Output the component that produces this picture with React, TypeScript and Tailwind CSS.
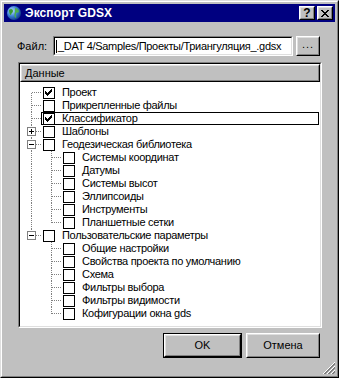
import React from 'react';

type Row = {
  level: 0 | 1;
  label: string;
  checked?: boolean;
  selected?: boolean;
  expander?: 'plus' | 'minus';
  // vertical line of the connector cell at the row's own level
  line: 'first' | 'mid' | 'last';
  // vertical line passing through the level-0 cell for children
  pass?: boolean;
};

const rows: Row[] = [
  { level: 0, label: 'Проект', checked: true, line: 'first' },
  { level: 0, label: 'Прикрепленные файлы', line: 'mid' },
  { level: 0, label: 'Классификатор', checked: true, selected: true, line: 'mid' },
  { level: 0, label: 'Шаблоны', expander: 'plus', line: 'mid' },
  { level: 0, label: 'Геодезическая библиотека', expander: 'minus', line: 'mid' },
  { level: 1, label: 'Системы координат', line: 'mid', pass: true },
  { level: 1, label: 'Датумы', line: 'mid', pass: true },
  { level: 1, label: 'Системы высот', line: 'mid', pass: true },
  { level: 1, label: 'Эллипсоиды', line: 'mid', pass: true },
  { level: 1, label: 'Инструменты', line: 'mid', pass: true },
  { level: 1, label: 'Планшетные сетки', line: 'last', pass: true },
  { level: 0, label: 'Пользовательские параметры', expander: 'minus', line: 'last' },
  { level: 1, label: 'Общие настройки', line: 'mid' },
  { level: 1, label: 'Свойства проекта по умолчанию', line: 'mid' },
  { level: 1, label: 'Схема', line: 'mid' },
  { level: 1, label: 'Фильтры выбора', line: 'mid' },
  { level: 1, label: 'Фильтры видимости', line: 'mid' },
  { level: 1, label: 'Кофигурации окна gds', line: 'last' },
];

const Dots = ({ x1, y1, x2, y2 }: { x1: number; y1: number; x2: number; y2: number }) => (
  <line
    x1={x1}
    y1={y1}
    x2={x2}
    y2={y2}
    stroke="#808080"
    strokeWidth={1}
    strokeDasharray="1 1"
    shapeRendering="crispEdges"
  />
);

// one 20x13 connector cell of the tree
const Cell = ({ kind, expander }: { kind: 'none' | 'pass' | 'first' | 'mid' | 'last'; expander?: 'plus' | 'minus' }) => (
  <svg width={20} height={13} className="shrink-0 block">
    {kind === 'pass' && <Dots x1={9.5} y1={0} x2={9.5} y2={13} />}
    {kind === 'mid' && <Dots x1={9.5} y1={0} x2={9.5} y2={13} />}
    {kind === 'first' && <Dots x1={9.5} y1={7} x2={9.5} y2={13} />}
    {kind === 'last' && <Dots x1={9.5} y1={0} x2={9.5} y2={7} />}
    {kind !== 'none' && kind !== 'pass' && <Dots x1={10} y1={6.5} x2={20} y2={6.5} />}
    {expander && (
      <g shapeRendering="crispEdges">
        <rect x={5.5} y={2.5} width={8} height={8} fill="#fff" stroke="#808080" />
        <line x1={7} y1={6.5} x2={12} y2={6.5} stroke="#000" />
        {expander === 'plus' && <line x1={9.5} y1={4} x2={9.5} y2={9} stroke="#000" />}
      </g>
    )}
  </svg>
);

const Check = ({ checked }: { checked?: boolean }) => (
  <svg width={12} height={12} className="shrink-0 block" shapeRendering="crispEdges">
    <rect x={0.5} y={0.5} width={11} height={11} fill="#fff" stroke="#000" />
    {checked &&
      [4, 5, 6, 5, 4, 3, 2].map((y, i) => <rect key={i} x={2 + i} y={y} width={1} height={3} fill="#000" />)}
  </svg>
);

const Globe = () => (
  <svg width={16} height={16} viewBox="0 0 16 16" className="shrink-0">
    <defs>
      <radialGradient id="g" cx="0.35" cy="0.35" r="0.75">
        <stop offset="0" stopColor="#bfe3ff" />
        <stop offset="0.5" stopColor="#3b7fd6" />
        <stop offset="1" stopColor="#0a2f7a" />
      </radialGradient>
    </defs>
    <circle cx={8} cy={8} r={7} fill="url(#g)" />
    <path d="M3 5 C5 3 7 4 7 6 C7 8 5 8 5 10 C4 10 3 8 3 5 Z" fill="#3a9a3a" />
    <path d="M9 3 C11 3 13 5 13 7 C12 8 10 7 10 9 C9 10 11 12 10 13 C8 12 8 9 9 7 Z" fill="#4caf50" />
  </svg>
);

const Raised = ({ className, children }: { className: string; children?: React.ReactNode }) => (
  <div className={`border border-t-white border-l-white border-r-black border-b-black ${className}`}>
    <div className="w-full h-full border border-t-[#dfdfdf] border-l-[#dfdfdf] border-r-[#808080] border-b-[#808080] flex items-center justify-center">
      {children}
    </div>
  </div>
);

export default function App() {
  return (
    <div className="w-[339px] h-[378px] bg-[#c0c0c0] relative font-['Liberation_Sans',Arial,sans-serif] text-[11px] text-black leading-[13px] border border-t-[#dfdfdf] border-l-[#dfdfdf] border-r-black border-b-black">
      <div className="h-full border border-t-white border-l-white border-r-[#808080] border-b-[#808080] p-[2px] flex flex-col">
        {/* title bar */}
        <div className="h-[18px] bg-[#000080] flex items-center pl-[2px] pr-[2px] shrink-0">
          <Globe />
          <span className="ml-[3px] text-white font-bold text-[12px] tracking-[0.1px]">Экспорт GDSX</span>
          <div className="ml-auto flex">
            <Raised className="w-[16px] h-[14px] bg-[#c0c0c0]">
              <span className="font-bold text-[12px] leading-[10px]">?</span>
            </Raised>
            <Raised className="w-[16px] h-[14px] bg-[#c0c0c0] ml-[2px]">
              <svg width={8} height={7} shapeRendering="crispEdges">
                <path d="M0 0h2v1h-2zM6 0h2v1h-2zM1 1h2v1h-2zM5 1h2v1h-2zM2 2h4v1h-4zM3 3h2v1h-2zM2 4h4v1h-4zM1 5h2v1h-2zM5 5h2v1h-2zM0 6h2v1h-2zM6 6h2v1h-2z" fill="#000" />
              </svg>
            </Raised>
          </div>
        </div>

        {/* body */}
        <div className="flex-1 flex flex-col pl-[13px] pr-[14px] pt-[14px]">
          <div className="flex items-center h-[20px]">
            <span className="w-[36px] shrink-0">Файл:</span>
            <div className="w-[240px] h-[20px] border border-t-[#808080] border-l-[#808080] border-r-white border-b-white">
              <div className="h-full bg-white border border-t-black border-l-black border-r-[#dfdfdf] border-b-[#dfdfdf] flex items-center overflow-hidden whitespace-nowrap pl-[1px] tracking-[-0.3px]">
                <span className="w-[1px] h-[13px] bg-black mr-[1px] shrink-0" />
                <span>_DAT 4/Samples/Проекты/Триангуляция_.gdsx</span>
              </div>
            </div>
            <Raised className="w-[24px] h-[20px] ml-[3px]">
              <span className="-mt-[3px] tracking-[1px]">...</span>
            </Raised>
          </div>

          {/* tree panel */}
          <div className="mt-[6px] ml-[1px] w-[304px] h-[266px] border border-t-[#808080] border-l-[#808080] border-r-white border-b-white">
            <div className="h-full bg-white border border-t-black border-l-black border-r-[#dfdfdf] border-b-[#dfdfdf] flex flex-col">
              <Raised className="h-[18px] bg-[#c0c0c0] shrink-0">
                <span className="w-full pl-[3px]">Данные</span>
              </Raised>
              <div className="pt-[4px] pl-[2px] pr-[1px] flex flex-col tracking-[-0.3px]">
                {rows.map((r) => (
                  <div key={r.label} className="flex h-[13px] items-stretch">
                    {r.level === 1 && <Cell kind={r.pass ? 'pass' : 'none'} />}
                    <Cell kind={r.line} expander={r.expander} />
                    <div
                      className={`flex-1 -ml-[1px] flex items-center border ${
                        r.selected ? 'border-black' : 'border-transparent'
                      }`}
                    >
                      <div className="ml-[1px]">
                        <Check checked={r.checked} />
                      </div>
                      <span className="ml-[7px] whitespace-nowrap">{r.label}</span>
                    </div>
                  </div>
                ))}
              </div>
            </div>
          </div>

          {/* buttons */}
          <div className="flex justify-end mt-[5px] pr-[1px]">
            <div className="w-[79px] h-[25px] border border-black">
              <Raised className="w-full h-full">
                <span>OK</span>
              </Raised>
            </div>
            <Raised className="w-[74px] h-[25px] ml-[4px]">
              <span>Отмена</span>
            </Raised>
          </div>
        </div>
      </div>

      {/* size grip */}
      <svg width={13} height={13} className="absolute right-[3px] bottom-[3px]" shapeRendering="crispEdges">
        {[0, 4, 8].map((o) => (
          <g key={o}>
            <line x1={1 + o} y1={13} x2={13} y2={1 + o} stroke="#fff" />
            <line x1={2 + o} y1={13} x2={13} y2={2 + o} stroke="#808080" />
            <line x1={3 + o} y1={13} x2={13} y2={3 + o} stroke="#808080" />
          </g>
        ))}
      </svg>
    </div>
  );
}
